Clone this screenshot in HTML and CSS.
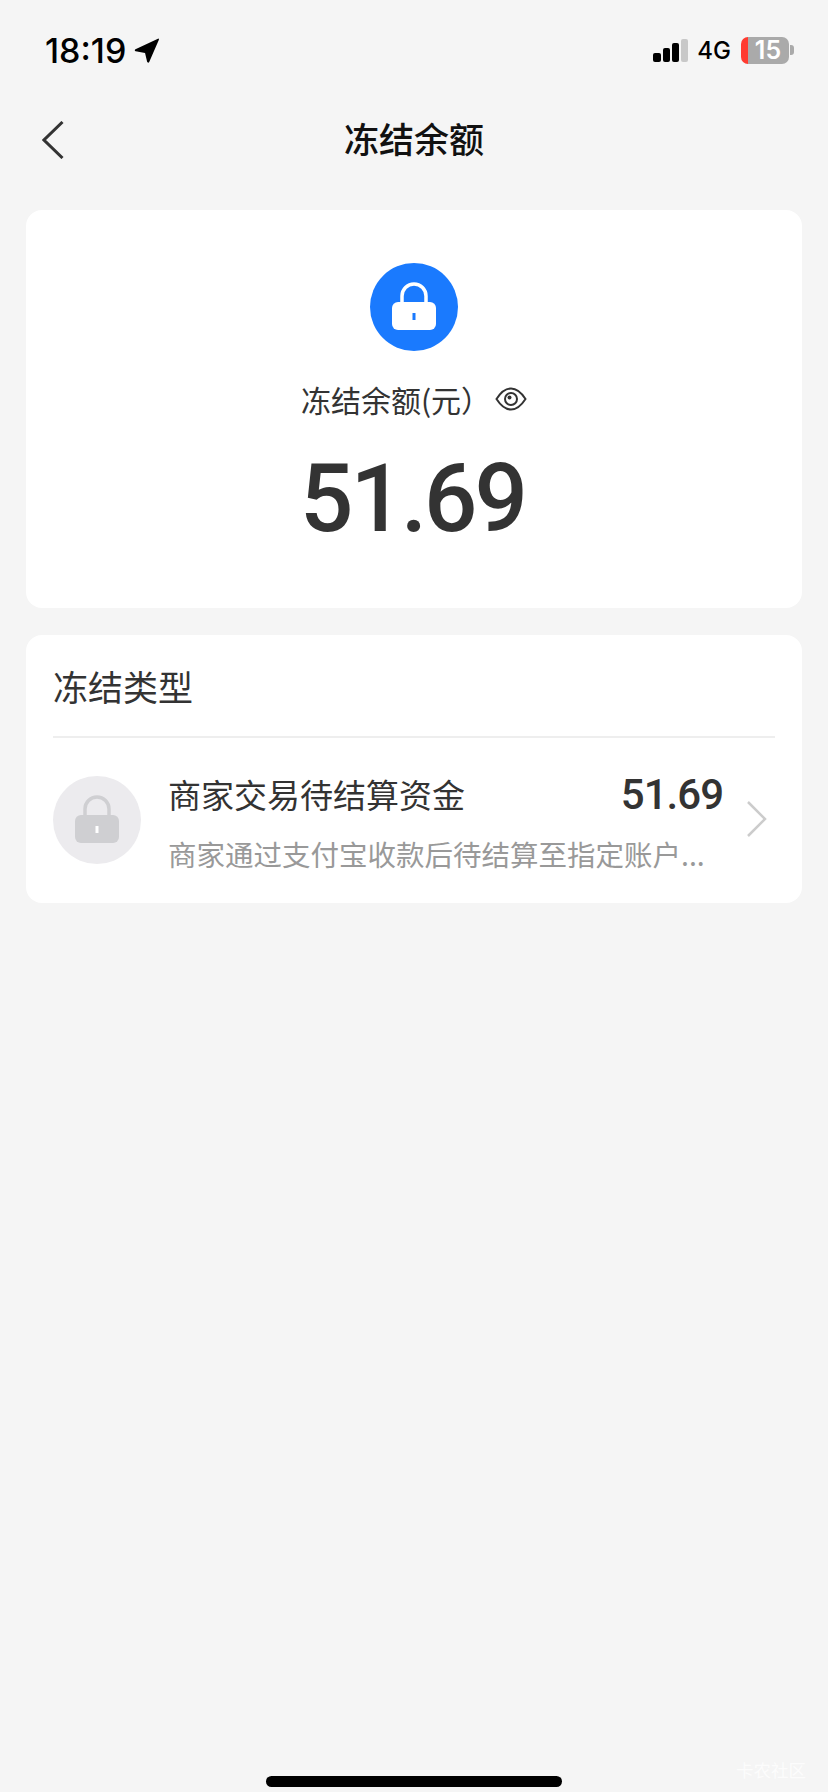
FILE: index.html
```html
<!DOCTYPE html>
<html lang="zh-CN">
<head>
  <meta charset="UTF-8" />
  <meta name="viewport" content="width=device-width, initial-scale=1.0" />
  <title>冻结余额</title>
  <link rel="stylesheet" href="styles.css">
</head>
<body>
  <div class="page">
    <div class="status">
      <div class="status-left">
        <span class="time">18:19</span>
        <svg class="arrow" width="25" height="25" viewBox="0 0 24 24"><path d="M23 .6c.6-.2 1.100.3.900 1L14.600 23c-.4.900-1.700.900-2-.1l-2-8.400-9-1.700c-1-.2-1.200-1.500-.2-2z" fill="#000"/></svg>
      </div>
      <div class="status-right">
        <div class="signal">
          <i class="bar b1"></i><i class="bar b2"></i><i class="bar b3"></i><i class="bar b4"></i>
        </div>
        <span class="net">4G</span>
        <div class="battery"><span class="level">15</span></div>
        <i class="nub"></i>
      </div>
    </div>

    <div class="nav">
      <svg class="back" width="22" height="38" viewBox="0 0 22 38"><path d="M20.500 1 2 19l18.500 18" fill="none" stroke="#333" stroke-width="3"/></svg>
      <h1>冻结余额</h1>
    </div>

    <div class="card summary">
      <div class="lock-circle blue">
        <svg width="46" height="50" viewBox="0 0 46 50"><path d="M11 22V14a12 12 0 0 1 24 0v8" fill="none" stroke="#fff" stroke-width="3.500"/><rect x="1" y="20" width="44" height="28" rx="6" fill="#fff"/><rect x="21.500" y="31" width="3" height="7" fill="#1a7afe"/></svg>
      </div>
      <div class="label">
        <span>冻结余额(元）</span>
        <svg width="32" height="24" viewBox="0 0 32 24"><path d="M1.500 12C6 5 11 1.500 16 1.500S26 5 30.500 12C26 19 21 22.500 16 22.500S6 19 1.500 12z" fill="none" stroke="#333" stroke-width="2"/><circle cx="16" cy="12" r="6" fill="none" stroke="#333" stroke-width="2"/><circle cx="14.500" cy="10.500" r="2" fill="#333"/></svg>
      </div>
      <div class="amount">51.69</div>
    </div>

    <div class="card types">
      <div class="types-head">冻结类型</div>
      <div class="row">
        <div class="lock-circle grey">
          <svg width="46" height="50" viewBox="0 0 46 50"><path d="M11 22V14a12 12 0 0 1 24 0v8" fill="none" stroke="#cfcfd2" stroke-width="3.500"/><rect x="1" y="20" width="44" height="28" rx="6" fill="#cfcfd2"/><rect x="21.500" y="31" width="3" height="7" fill="#fff"/></svg>
        </div>
        <div class="row-body">
          <div class="row-top">
            <span class="row-name">商家交易待结算资金</span>
            <span class="row-amount">51.69</span>
          </div>
          <div class="row-sub">商家通过支付宝收款后待结算至指定账户...</div>
        </div>
        <svg class="chevron" width="20" height="36" viewBox="0 0 20 36"><path d="M1 1l17 17L1 35" fill="none" stroke="#ccc" stroke-width="2.500"/></svg>
      </div>
    </div>

    <div class="home-bar"></div>
    <div class="watermark">卡农社区</div>
  </div>
</body>
</html>
```

FILE: styles.css
```css
html, body {
  margin: 0;
  padding: 0;
  background: #f5f5f5;
  font-family: "Noto Sans CJK SC", "Noto Sans", sans-serif;
  color: #333;
}
.page {
  position: relative;
  height: 1792px;
  display: flex;
  flex-direction: column;
  overflow: hidden;
}

/* status bar */
.status {
  height: 100px;
  display: flex;
  align-items: center;
  justify-content: space-between;
  padding: 0 34px 0 45px;
}
.status-left { display: flex; align-items: center; gap: 8px; }
.time {
  font-family: Inter, sans-serif;
  font-size: 34px;
  font-weight: 500;
  color: #000;
}
.status-right { display: flex; align-items: center; }
.signal { display: flex; align-items: flex-end; gap: 2px; height: 23px; margin-right: 9px; }
.bar { width: 7px; background: #000; border-radius: 2px; }
.b1 { height: 9px; width: 8px; }
.b2 { height: 14px; }
.b3 { height: 19px; }
.b4 { height: 23px; background: #c8c8c8; }
.net {
  font-family: Inter, sans-serif;
  font-size: 24px;
  font-weight: 500;
  color: #000;
  margin-right: 10px;
}
.battery {
  width: 48px;
  height: 27px;
  border-radius: 7px;
  background: linear-gradient(to right, #ff3b30 7px, #aaa 7px);
  display: flex;
  align-items: center;
  justify-content: center;
}
.level {
  font-family: Inter, sans-serif;
  font-size: 25px;
  font-weight: 600;
  color: #fff;
  margin-left: 6px;
}
.nub { width: 4px; height: 10px; margin-left: 1px; background: #aaa; border-radius: 0 3px 3px 0; }

/* nav */
.nav {
  position: relative;
  height: 80px;
  display: flex;
  align-items: center;
  justify-content: center;
}
.nav h1 {
  margin: -4px 0 0;
  font-size: 35px;
  font-weight: 500;
  line-height: 50px;
  color: #111;
}
.back { position: absolute; left: 42px; top: 21px; }

/* cards */
.card {
  margin: 0 26px;
  background: #fff;
  border-radius: 16px;
}
.summary {
  margin-top: 30px;
  height: 398px;
  box-sizing: border-box;
  padding-top: 53px;
  display: flex;
  flex-direction: column;
  align-items: center;
}
.lock-circle {
  width: 88px;
  height: 88px;
  flex: none;
  border-radius: 50%;
  display: flex;
  align-items: center;
  justify-content: center;
}
.lock-circle.blue { background: #1a7afe; }
.lock-circle.grey { background: #ecebee; margin-top: 4px; }
.label {
  margin-top: 25px;
  height: 46px;
  display: flex;
  align-items: center;
  gap: 4px;
  font-size: 30px;
  line-height: 46px;
}
.amount {
  margin: 22px 3px 0 0;
  font-family: Roboto, sans-serif;
  font-size: 94px;
  font-weight: 500;
  line-height: 110px;
  letter-spacing: -3px;
}
.types { margin-top: 27px; height: 268px; }
.types-head {
  margin: 0 27px;
  height: 101px;
  line-height: 101px;
  font-size: 35px;
  border-bottom: 2px solid #eee;
}
.row {
  display: flex;
  align-items: flex-start;
  padding: 34px 35px 0 27px;
}
.row-body { flex: 1; margin-left: 27px; min-width: 0; }
.row-top { display: flex; justify-content: space-between; align-items: center; height: 44px; }
.row-name { font-size: 33px; line-height: 44px; }
.row-amount {
  font-family: Roboto, sans-serif;
  font-size: 42px;
  font-weight: 500;
  letter-spacing: -1px;
}
.row-sub {
  margin-top: 18px;
  font-size: 28.5px;
  line-height: 40px;
  color: #999;
  white-space: nowrap;
}
.chevron { flex: none; margin: 29px 0 0 24px; }

/* bottom */
.home-bar {
  width: 296px;
  height: 11px;
  margin: auto auto 5px;
  border-radius: 6px;
  background: #000;
}
.watermark {
  position: absolute;
  left: 736px;
  top: 1758px;
  font-size: 17.5px;
  line-height: 24px;
  color: rgba(255, 255, 255, 0.75);
}
```
